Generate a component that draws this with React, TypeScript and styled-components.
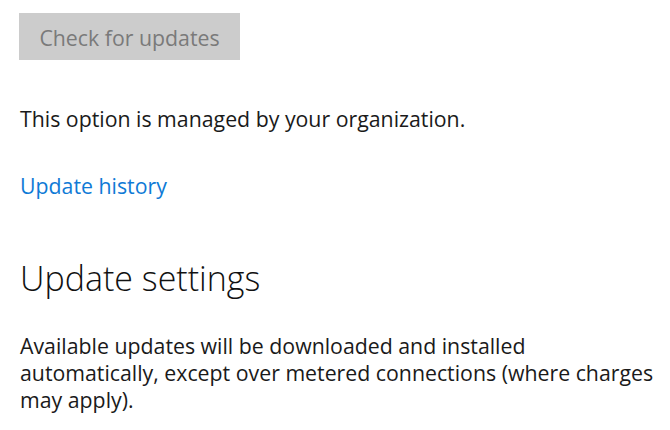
import styled, { createGlobalStyle } from "styled-components";

const GlobalStyle = createGlobalStyle`
    html, body {
        margin: 0;
        padding: 0;
        background: #ffffff;
    }
    body {
        font-family: "Open Sans", "Noto Sans", "Liberation Sans", sans-serif;
        color: #1a1a1a;
    }
`

const Page = styled.div`
    width: 670px;
    height: 430px;
    overflow: hidden;
    padding: 13px 0 0 20px;
    box-sizing: border-box;
    display: flex;
    flex-direction: column;
    align-items: flex-start;
`

const UpdateButton = styled.button`
    width: 221px;
    height: 47px;
    margin-left: -1px;
    padding: 2px 0 0 0;
    border: none;
    background-color: #cccccc;
    color: #7a7a7a;
    font-family: inherit;
    font-size: 21.3px;
    display: flex;
    align-items: center;
    justify-content: center;
    cursor: default;
`

const Text = styled.p<{ $top: number }>`
    margin: ${(p) => p.$top}px 0 0 0;
    font-size: 21.3px;
    line-height: 27px;
`

const Link = styled.a<{ $top: number }>`
    margin-top: ${(p) => p.$top}px;
    font-size: 21.3px;
    line-height: 27px;
    color: #0f7ad6;
    text-decoration: none;
    cursor: pointer;
`

const Heading = styled.h2<{ $top: number }>`
    margin: ${(p) => p.$top}px 0 0 0;
    font-size: 34px;
    font-weight: 300;
    line-height: 40px;
    color: #111111;
`

const Description = styled(Text)`
    width: 640px;
`

export default function App() {
    return (
        <>
            <GlobalStyle />
            <Page>
                <UpdateButton disabled>Check for updates</UpdateButton>
                <Text $top={45}>This option is managed by your organization.</Text>
                <Link $top={40}>Update history</Link>
                <Heading $top={59}>Update settings</Heading>
                <Description $top={34}>
                    Available updates will be downloaded and installed automatically, except over
                    metered connections (where charges may apply).
                </Description>
            </Page>
        </>
    )
}
